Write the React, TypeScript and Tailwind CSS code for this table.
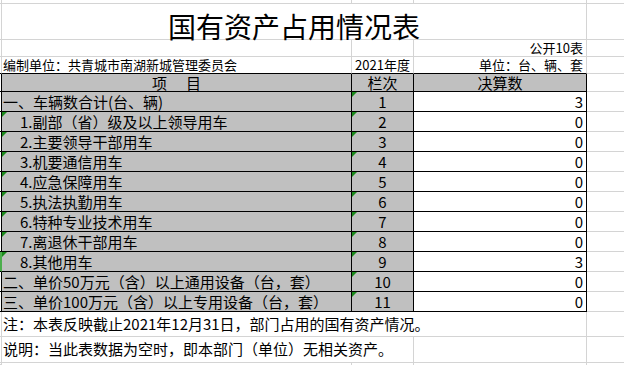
import type { ReactNode } from "react"

const rows = [
	{ label: "一、车辆数合计(台、辆)", no: 1, value: 3, sub: false },
	{ label: "1.副部（省）级及以上领导用车", no: 2, value: 0, sub: true },
	{ label: "2.主要领导干部用车", no: 3, value: 0, sub: true },
	{ label: "3.机要通信用车", no: 4, value: 0, sub: true },
	{ label: "4.应急保障用车", no: 5, value: 0, sub: true },
	{ label: "5.执法执勤用车", no: 6, value: 0, sub: true },
	{ label: "6.特种专业技术用车", no: 7, value: 0, sub: true },
	{ label: "7.离退休干部用车", no: 8, value: 0, sub: true },
	{ label: "8.其他用车", no: 9, value: 3, sub: true },
	{ label: "二、单价50万元（含）以上通用设备（台，套）", no: 10, value: 0, sub: false },
	{ label: "三、单价100万元（含）以上专用设备（台，套）", no: 11, value: 0, sub: false },
]

// little green corner excel puts on "number stored as text" cells
function Flag() {
	return <span className="absolute top-0 left-0 border-t-[5px] border-r-[5px] border-t-[#1a8a1a] border-r-transparent" />
}

function Gutter({ dark, green }: { dark?: boolean; green?: boolean }) {
	if (green) return <div className="w-[2px] shrink-0 bg-[#4cae4c] border-r border-b border-r-[#4cae4c] border-b-black" />
	return <div className={`w-[2px] shrink-0 border-r border-b ${dark ? "border-black" : "border-[#d4d4d4]"}`} />
}

function GridRow({ h, children }: { h: string; children: ReactNode }) {
	return <div className={`flex shrink-0 ${h}`}>{children}</div>
}

export default function App() {
	return (
		<div className="w-[624px] h-[365px] bg-white overflow-hidden flex flex-col text-black" style={{ fontFamily: '"Noto Sans CJK SC", sans-serif' }}>
			{/* top strip */}
			<GridRow h="h-[4px]">
				<Gutter />
				<div className="w-[350px] shrink-0 border-r border-b border-[#d4d4d4]" />
				<div className="w-[62px] shrink-0 border-r border-b border-[#d4d4d4]" />
				<div className="w-[173px] shrink-0 border-r border-b border-[#d4d4d4]" />
				<div className="flex-1 border-b border-[#d4d4d4]" />
			</GridRow>

			{/* title */}
			<GridRow h="h-[36px]">
				<Gutter />
				<div className="w-[585px] shrink-0 border-r border-b border-[#d4d4d4] text-center text-[28px] leading-[28px] pt-[8px]">国有资产占用情况表</div>
				<div className="flex-1 border-b border-[#d4d4d4]" />
			</GridRow>

			<GridRow h="h-[17px]">
				<Gutter />
				<div className="w-[350px] shrink-0 border-r border-b border-[#d4d4d4]" />
				<div className="w-[62px] shrink-0 border-r border-b border-[#d4d4d4]" />
				<div className="w-[173px] shrink-0 border-r border-b border-[#d4d4d4] text-right pr-[3px] text-[13px] leading-[16px]">公开10表</div>
				<div className="flex-1 border-b border-[#d4d4d4]" />
			</GridRow>

			<GridRow h="h-[17px]">
				<div className="w-[2px] shrink-0 border-r border-b border-r-[#d4d4d4] border-b-black" />
				<div className="w-[350px] shrink-0 border-r border-b border-r-[#d4d4d4] border-b-black pl-[1px] text-[13px] leading-[16px] whitespace-nowrap">编制单位：共青城市南湖新城管理委员会</div>
				<div className="w-[62px] shrink-0 border-r border-b border-r-[#d4d4d4] border-b-black text-center text-[13px] leading-[16px] whitespace-nowrap">2021年度</div>
				<div className="w-[173px] shrink-0 border-r border-b border-r-[#d4d4d4] border-b-black text-right pr-[3px] text-[13px] leading-[16px]">单位：台、辆、套</div>
				<div className="flex-1 border-b border-[#d4d4d4]" />
			</GridRow>

			{/* header */}
			<GridRow h="h-[18px]">
				<Gutter dark />
				<div className="w-[350px] shrink-0 border-r border-b border-black bg-[#c0c0c0] flex justify-center gap-[19px] text-[15px] leading-[17px]">
					<span>项</span>
					<span>目</span>
				</div>
				<div className="w-[62px] shrink-0 border-r border-b border-black bg-[#c0c0c0] text-center text-[15px] leading-[17px]">栏次</div>
				<div className="w-[173px] shrink-0 border-r border-b border-black bg-[#c0c0c0] text-center text-[15px] leading-[17px]">决算数</div>
				<div className="flex-1 border-b border-[#d4d4d4]" />
			</GridRow>

			{rows.map((r) => (
				<GridRow key={r.no} h="h-[20px]">
					<Gutter dark green={r.no === 9} />
					<div className={`relative w-[350px] shrink-0 border-r border-b border-black bg-[#c0c0c0] text-[15px] leading-[19px] whitespace-nowrap ${r.sub ? "pl-[18px]" : "pl-[1px]"}`}>
						{r.sub && <Flag />}
						{r.label}
					</div>
					<div className="relative w-[62px] shrink-0 border-r border-b border-black bg-[#c0c0c0] text-center text-[15px] leading-[19px]">
						<Flag />
						{r.no}
					</div>
					<div className="w-[173px] shrink-0 border-r border-b border-black bg-white text-right pr-[3px] text-[15px] leading-[19px]">{r.value}</div>
					<div className="flex-1 border-b border-[#d4d4d4]" />
				</GridRow>
			))}

			{/* notes */}
			<GridRow h="h-[25px]">
				<Gutter />
				<div className="w-[585px] shrink-0 border-r border-b border-[#d4d4d4] flex items-center pl-[1px] text-[15px] whitespace-nowrap">注：本表反映截止2021年12月31日，部门占用的国有资产情况。</div>
				<div className="flex-1 border-b border-[#d4d4d4]" />
			</GridRow>
			<GridRow h="h-[26px]">
				<Gutter />
				<div className="w-[412px] shrink-0 border-r border-b border-[#d4d4d4] flex items-center pl-[1px] text-[15px] whitespace-nowrap">说明：当此表数据为空时，即本部门（单位）无相关资产。</div>
				<div className="w-[173px] shrink-0 border-r border-b border-[#d4d4d4]" />
				<div className="flex-1 border-b border-[#d4d4d4]" />
			</GridRow>

			<div className="flex flex-1">
				<Gutter />
				<div className="w-[350px] shrink-0 border-r border-[#d4d4d4]" />
				<div className="w-[62px] shrink-0 border-r border-[#d4d4d4]" />
				<div className="w-[173px] shrink-0 border-r border-[#d4d4d4]" />
				<div className="flex-1" />
			</div>
		</div>
	)
}
